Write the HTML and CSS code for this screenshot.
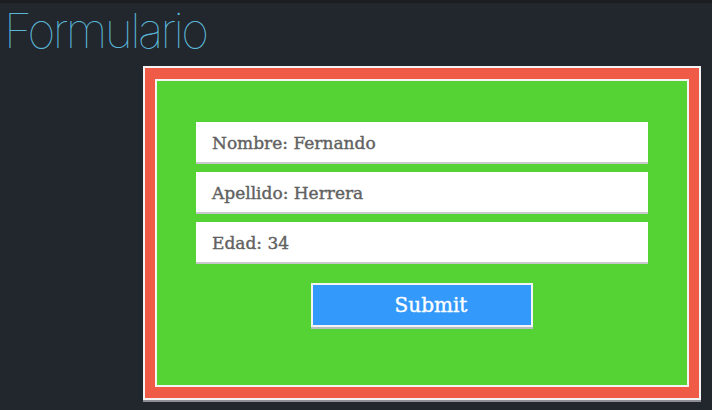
FILE: index.html
```html
<!DOCTYPE html>
<html lang="es">
<head>
<meta charset="utf-8">
<link rel="stylesheet" href="styles.css">
</head>
<body>
<div class="topbar"></div>
<h1 class="title">Formulario</h1>
<div class="frame">
  <form class="panel">
    <div class="field">Nombre: Fernando</div>
    <div class="field">Apellido: Herrera</div>
    <div class="field">Edad: 34</div>
    <button type="button" class="submit">Submit</button>
  </form>
</div>
</body>
</html>
```
FILE: styles.css
```css
html, body {
  margin: 0;
  padding: 0;
  background: #22262d;
  height: 100%;
  overflow: hidden;
}
.topbar {
  height: 3px;
  background: #1b1d21;
}
.title {
  margin: 0;
  padding-left: 4px;
  height: 63px;
  font-family: "Inter", "Liberation Sans", sans-serif;
  font-weight: 100;
  font-size: 48px;
  line-height: 55px;
  letter-spacing: -2.6px;
  color: #5ab6d6;
}
.frame {
  margin-left: 143px;
  width: 554px;
  height: 330px;
  border: 2px solid #f4f4f4;
  background: #ef5b46;
  padding: 0;
  box-shadow: 0 2px 0 #8e8f95;
  display: flex;
}
.panel {
  margin: 11px 10px 11px 10px;
  flex: 1;
  border: 2px solid #f4f4f4;
  background: #55d334;
  display: flex;
  flex-direction: column;
  align-items: center;
  padding-top: 41px;
}
.field {
  box-sizing: border-box;
  width: 452px;
  height: 42px;
  background: #fff;
  border-bottom: 2px solid #c9c9cd;
  margin-bottom: 8px;
  padding-left: 16px;
  padding-top: 2px;
  font-family: "DejaVu Serif", serif;
  font-size: 17px;
  line-height: 38px;
  color: #616161;
  -webkit-text-stroke: 0.4px #616161;
}
.submit {
  margin-top: 11px;
  width: 222px;
  height: 44px;
  border: 2px solid #f4f4f4;
  background: #3399fb;
  box-shadow: 0 2px 0 #b9bcc0;
  color: #fff;
  font-family: "DejaVu Serif", serif;
  font-size: 20px;
  -webkit-text-stroke: 0.4px #fff;
  padding: 0 0 0 18px;
}
```
